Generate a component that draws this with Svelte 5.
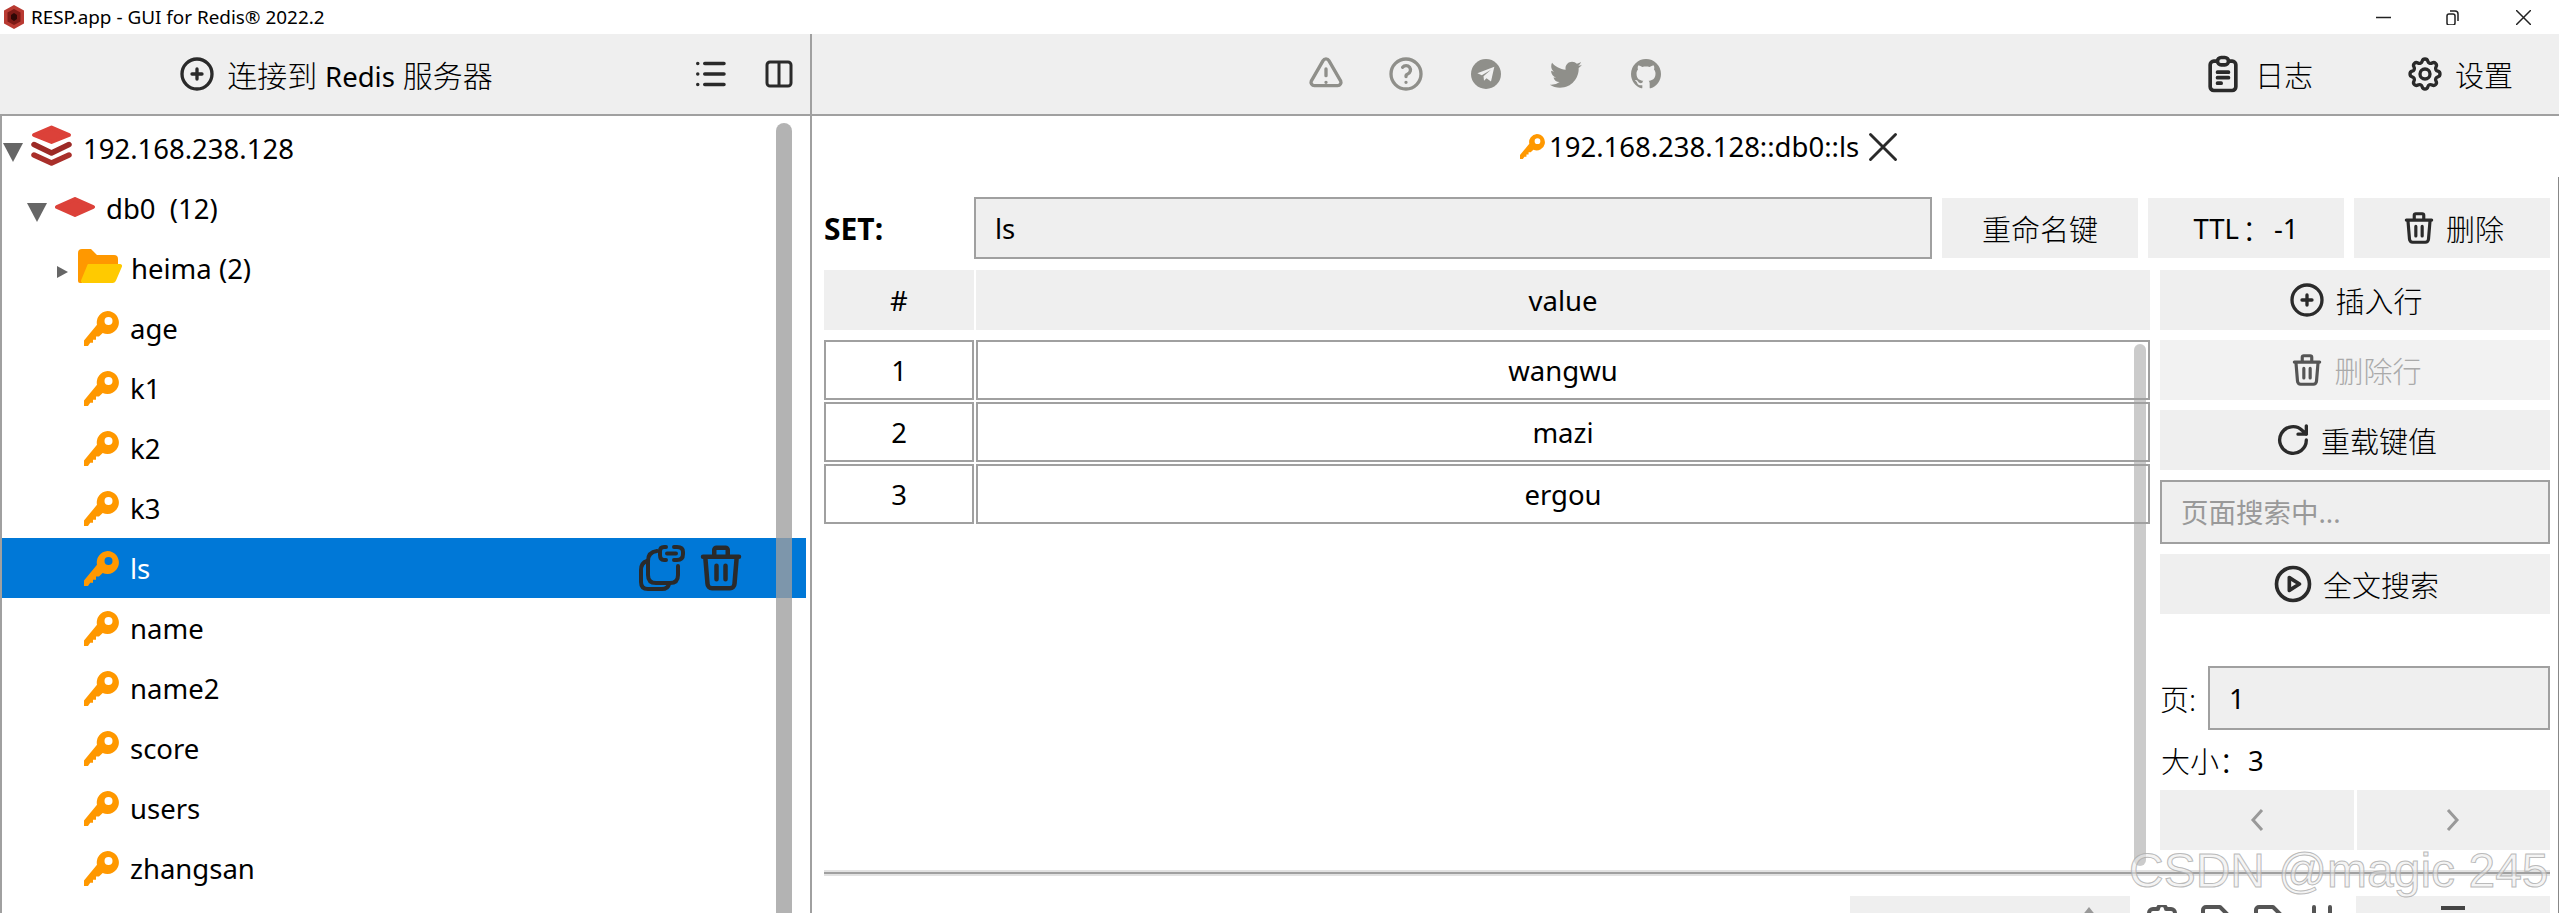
<script lang="ts">
	// Tabler style outline icons, drawn on a 24 box
	const ic = {
		plus: 'M3 12a9 9 0 1 0 18 0a9 9 0 1 0-18 0 M9 12h6 M12 9v6',
		list: 'M9 6h11 M9 12h11 M9 18h11 M5 6v.01 M5 12v.01 M5 18v.01',
		columns: 'M4 6a2 2 0 0 1 2-2h12a2 2 0 0 1 2 2v12a2 2 0 0 1-2 2h-12a2 2 0 0 1-2-2z M12 4v16',
		alert: 'M12 9v4 M12 17h.01 M5 19h14a2 2 0 0 0 1.84-2.75L13.74 4a2 2 0 0 0-3.5 0L3.16 16.25A2 2 0 0 0 5 19',
		help: 'M3 12a9 9 0 1 0 18 0a9 9 0 1 0-18 0 M12 17v.01 M12 13.5a1.5 1.5 0 0 1 1-1.5a2.6 2.6 0 1 0-3-4',
		clipboard: 'M9 5h-2a2 2 0 0 0-2 2v12a2 2 0 0 0 2 2h10a2 2 0 0 0 2-2v-12a2 2 0 0 0-2-2h-2 M11 3h2a2 2 0 0 1 0 4h-2a2 2 0 0 1 0-4 M9 11h6 M9 14h6 M9 17h2',
		gear: 'M10.325 4.317c.426-1.756 2.924-1.756 3.35 0a1.724 1.724 0 0 0 2.573 1.066c1.543-.94 3.31.826 2.37 2.37a1.724 1.724 0 0 0 1.065 2.572c1.756.426 1.756 2.924 0 3.35a1.724 1.724 0 0 0-1.066 2.573c.94 1.543-.826 3.31-2.37 2.37a1.724 1.724 0 0 0-2.572 1.065c-.426 1.756-2.924 1.756-3.35 0a1.724 1.724 0 0 0-2.573-1.066c-1.543.94-3.31-.826-2.37-2.37a1.724 1.724 0 0 0-1.065-2.572c-1.756-.426-1.756-2.924 0-3.35a1.724 1.724 0 0 0 1.066-2.573c-.94-1.543.826-3.31 2.37-2.37c1 .608 2.296.07 2.572-1.065z M9 12a3 3 0 1 0 6 0a3 3 0 1 0-6 0',
		trash: 'M4 7h16 M10 11v6 M14 11v6 M5 7l1 12a2 2 0 0 0 2 2h8a2 2 0 0 0 2-2l1-12 M9 7v-3a1 1 0 0 1 1-1h4a1 1 0 0 1 1 1v3',
		reload: 'M20 12a8 8 0 1 1-2.4-5.7L20 8.5 M20 3.5v5h-5',
		play: 'M3 12a9 9 0 1 0 18 0a9 9 0 1 0-18 0 M10 8.5v7l5.5-3.5z',
		close: 'M6 6l12 12 M18 6L6 18'
	};
	const twitter = 'M22.46 6c-.77.35-1.6.58-2.46.69.88-.53 1.56-1.37 1.88-2.38-.83.5-1.75.85-2.72 1.05C18.37 4.5 17.26 4 16 4c-2.35 0-4.27 1.92-4.27 4.29 0 .34.04.67.11.98C8.28 9.09 5.11 7.38 3 4.79c-.37.63-.58 1.37-.58 2.15 0 1.49.75 2.81 1.91 3.56-.71 0-1.37-.2-1.95-.5v.03c0 2.08 1.48 3.82 3.44 4.21a4.22 4.22 0 0 1-1.93.07 4.28 4.28 0 0 0 4 2.98 8.521 8.521 0 0 1-5.33 1.84c-.34 0-.68-.02-1.02-.06C3.44 20.29 5.7 21 8.12 21 16 21 20.33 14.46 20.33 8.79c0-.19 0-.37-.01-.56.84-.6 1.56-1.36 2.14-2.23z';
	const github = 'M12,3A9,9 0 0,0 3,12C3,16 5.6,19.4 9.2,20.6C9.6,20.7 9.8,20.4 9.8,20.2C9.8,20 9.8,19.4 9.8,18.7C7.3,19.2 6.8,17.5 6.8,17.5C6.4,16.4 5.8,16.2 5.8,16.2C5,15.6 5.9,15.6 5.9,15.6C6.8,15.7 7.2,16.5 7.2,16.5C8,17.9 9.3,17.5 9.8,17.3C9.9,16.7 10.1,16.3 10.4,16.1C8.4,15.9 6.3,15.1 6.3,11.7C6.3,10.7 6.7,9.9 7.2,9.3C7.1,9.1 6.8,8.1 7.3,6.9C7.3,6.9 8.1,6.7 9.8,7.8C10.5,7.6 11.3,7.5 12,7.5C12.7,7.5 13.5,7.6 14.2,7.8C15.9,6.7 16.7,6.9 16.7,6.9C17.2,8.1 16.9,9.1 16.8,9.3C17.3,9.9 17.7,10.7 17.7,11.7C17.7,15.1 15.6,15.9 13.6,16.1C13.9,16.4 14.2,16.9 14.2,17.8C14.2,19 14.2,20 14.2,20.2C14.2,20.4 14.4,20.7 14.8,20.6C18.4,19.4 21,16 21,12A9,9 0 0,0 12,3Z';

	const keys = ['age', 'k1', 'k2', 'k3', 'ls', 'name', 'name2', 'score', 'users', 'zhangsan'];
	const rows = ['wangwu', 'mazi', 'ergou'];

	let selected = $state('ls');
</script>

{#snippet ti(d, size)}
	<svg class="ti" width={size} height={size} viewBox="0 0 24 24"><path {d} /></svg>
{/snippet}

{#snippet key(size)}
	<svg class="key" width={size} height={size} viewBox="0 0 35 35">
		<path d="M23.5 0a11.5 11.5 0 1 1-4.8 22L15 25.600h-3v3.200H9v3H6.200L4 35H0v-5.500L13 13.800A11.500 11.500 0 0 1 23.500 0zm1 6a4 4 0 1 0 0 8a4 4 0 0 0 0-8z" fill-rule="evenodd" />
	</svg>
{/snippet}

<div class="app">
	<header class="titlebar">
		<svg class="logo" width="22" height="24" viewBox="0 0 22 24">
			<path d="M11 0l10 5.500v13L11 24 1 18.500v-13z" fill="#b93a32" />
			<path d="M11 4l6.500 3.500v9L11 20l-6.500-3.500v-9z" fill="#7d1a16" />
			<path d="M11 8l3 2v4l-3 2-3-2v-4z" fill="#2e0806" />
		</svg>
		<span class="title">RESP.app - GUI for Redis® 2022.2</span>
		<div class="winctl">
			<svg width="15" height="15" viewBox="0 0 15 15"><path d="M0 7.500h15" /></svg>
			<svg width="15" height="15" viewBox="0 0 15 15"><path d="M1 6a2 2 0 0 1 2-2h4a2 2 0 0 1 2 2v7a2 2 0 0 1-2 2H3a2 2 0 0 1-2-2z M4 1h5a3 3 0 0 1 3 3v7" /></svg>
			<svg width="15" height="15" viewBox="0 0 15 15"><path d="M0 0l15 15 M15 0L0 15" /></svg>
		</div>
	</header>

	<div class="main">
		<aside class="left">
			<div class="tools left-tools">
				<button class="connect cjk">
					{@render ti(ic.plus, 40)}
					<span>连接到 <span class="latin">Redis</span> 服务器</span>
				</button>
				<button class="plain">{@render ti(ic.list, 42)}</button>
				<button class="plain">{@render ti(ic.columns, 36)}</button>
			</div>

			<div class="tree">
				<div class="row root">
					<span class="arrow big"></span>
					<svg class="node-ic" width="41" height="41" viewBox="0 0 41 41">
						<path d="M20.500 2.500L38 10 20.500 17 3 10z" fill="#dc4139" stroke="#dc4139" stroke-width="4" stroke-linejoin="round" />
						<path d="M3 19.500l17.500 8.500L38 19.500" fill="none" stroke="#9c2a26" stroke-width="5.500" stroke-linejoin="round" stroke-linecap="round" />
						<path d="M3 30l17.500 8L38 30" fill="none" stroke="#a92f2a" stroke-width="5.500" stroke-linejoin="round" stroke-linecap="round" />
					</svg>
					<span>192.168.238.128</span>
				</div>
				<div class="row db">
					<span class="arrow big"></span>
					<svg class="db-ic" width="42" height="20" viewBox="0 0 42 20">
						<path d="M21 2L39 10 21 18 3 10z" fill="#dc4139" stroke="#dc4139" stroke-width="4" stroke-linejoin="round" />
					</svg>
					<span class="pre">db0  (12)</span>
				</div>
				<div class="row folder">
					<span class="arrow small"></span>
					<svg width="44" height="34" viewBox="0 0 44 34">
						<path d="M0 4a4 4 0 0 1 4-4h9l6 6h17a4 4 0 0 1 4 4v5H11L4 34H2a2 2 0 0 1-2-2z" fill="#ff9800" />
						<path d="M11 15h31a2 2 0 0 1 2 2.500l-6 14a4 4 0 0 1-3 2.500H5a2 2 0 0 1-2-2.500l6-14.500a2 2 0 0 1 2-2z" fill="#ffca00" />
					</svg>
					<span>heima (2)</span>
				</div>
				{#each keys as k}
					<button class="row leaf" class:sel={selected === k} onclick={() => (selected = k)}>
						{@render key(35)}
						<span>{k}</span>
						{#if selected === k}
							<span class="row-actions">
								<svg class="ti link" width="46" height="46" viewBox="0 0 46 46">
									<path d="M8 16Q2 18 2 25V37Q2 44 9 44H23Q29 44 30 39" />
									<path d="M18 6Q9 7 9 16V30Q9 38 17 38H31Q39 38 39 30V21" />
									<path d="M27 2H25Q21 2 21 6V10Q21 15 25 15H27 M35 2H38Q44 2 44 7V9Q44 15 38 15H35 M28 8.500H37" />
								</svg>
								{@render ti(ic.trash, 54)}
							</span>
						{/if}
					</button>
				{/each}
				<div class="tree-scroll"></div>
			</div>
		</aside>

		<section class="right">
			<div class="tools right-tools">
				<div class="links">
					{@render ti(ic.alert, 40)}
					{@render ti(ic.help, 40)}
					<svg width="40" height="40" viewBox="0 0 24 24">
						<circle cx="12" cy="12" r="9" fill="#8f8f8a" />
						<path d="M6.800 11.600L17 7.600 15 16.500 12.300 14.500 10.800 16 10.500 13.400 15 9.500 9.500 12.700z" fill="#efefef" />
					</svg>
					<svg width="40" height="40" viewBox="0 0 24 24"><path d={twitter} fill="#8f8f8a" transform="translate(.9 .9) scale(.92)" /></svg>
					<svg width="40" height="40" viewBox="0 0 24 24"><path d={github} fill="#8f8f8a" /></svg>
				</div>
				<button class="plain labeled cjk">{@render ti(ic.clipboard, 44)}日志</button>
				<button class="plain labeled cjk">{@render ti(ic.gear, 40)}设置</button>
			</div>

			<div class="tab">
				{@render key(25)}
				<span>192.168.238.128::db0::ls</span>
				{@render ti(ic.close, 50)}
			</div>

			<div class="body">
				<div class="keybar">
					<strong class="type">SET:</strong>
					<input class="field name" value="ls" />
					<button class="btn cjk">重命名键</button>
					<button class="btn cjk"><span class="latin">TTL</span><span class="colon">：</span><span class="latin">-1</span></button>
					<button class="btn cjk">{@render ti(ic.trash, 38)}删除</button>
				</div>

				<div class="content">
					<div class="table">
						<div class="cols head">
							<div class="th">#</div>
							<div class="th">value</div>
						</div>
						{#each rows as r, i}
							<div class="cols">
								<div class="td">{i + 1}</div>
								<div class="td">{r}</div>
							</div>
						{/each}
						<div class="table-scroll"></div>
					</div>

					<div class="side">
						<button class="btn cjk">{@render ti(ic.plus, 40)}插入行</button>
						<button class="btn cjk off">{@render ti(ic.trash, 38)}删除行</button>
						<button class="btn cjk">{@render ti(ic.reload, 40)}重载键值</button>
						<input class="field search cjk" placeholder="页面搜索中..." />
						<button class="btn cjk">{@render ti(ic.play, 44)}全文搜索</button>
						<div class="page cjk">
							<span>页:</span>
							<input class="field" value="1" />
						</div>
						<div class="size cjk">大小：<span class="latin">3</span></div>
						<div class="nav">
							<button class="btn"><svg class="chev" width="14" height="22" viewBox="0 0 14 22"><path d="M12 1L3 11l9 10" /></svg></button>
							<button class="btn"><svg class="chev" width="14" height="22" viewBox="0 0 14 22"><path d="M2 1l9 10-9 10" /></svg></button>
						</div>
					</div>
				</div>

				<div class="splitter"></div>

				<div class="bottom">
					<div class="combo"><svg width="16" height="10" viewBox="0 0 16 10"><path d="M8 0l8 10H0z" fill="#999" /></svg></div>
					<div class="fmt">
						<svg width="32" height="30" viewBox="0 0 32 30"><path d="M3 12V8a4 4 0 0 1 4-4h5a4 4 0 0 1 8 0h5a4 4 0 0 1 4 4v4" /></svg>
						<svg width="30" height="30" viewBox="0 0 30 30"><path d="M2 12V5a3 3 0 0 1 3-3h14l9 9" /></svg>
						<svg width="30" height="30" viewBox="0 0 30 30"><path d="M2 12V5a3 3 0 0 1 3-3h14l9 9" /></svg>
						<svg width="30" height="30" viewBox="0 0 30 30"><path d="M7 2v8 M23 2v8" /></svg>
					</div>
					<button class="btn save"><svg width="24" height="8" viewBox="0 0 24 8"><path d="M0 2h24" stroke="#444" stroke-width="4" /></svg></button>
				</div>
			</div>
		</section>
	</div>

	<div class="watermark">CSDN @magic 245</div>
</div>

<style>
	:global(body) {
		margin: 0;
		overflow: hidden;
		background: #fff;
	}

	.app {
		position: relative;
		width: 2559px;
		height: 913px;
		overflow: hidden;
		display: flex;
		flex-direction: column;
		font-family: "Noto Sans", "Noto Sans CJK SC", sans-serif;
		font-size: 27.5px;
		color: #000;
	}

	button {
		font: inherit;
		color: inherit;
		border: none;
		background: none;
		padding: 0;
		cursor: pointer;
	}

	.cjk {
		font-size: 29px;
		font-weight: 300;
	}

	.latin {
		font-size: 27.5px;
		font-weight: 400;
	}

	.ti {
		flex: none;
		fill: none;
		stroke: #2a2a2a;
		stroke-width: 2;
		stroke-linecap: round;
		stroke-linejoin: round;
	}

	.link {
		stroke-width: 4;
	}

	/* title bar */
	.titlebar {
		height: 34px;
		flex: none;
		display: flex;
		align-items: center;
		padding-left: 3px;
		font-size: 18.900px;
	}

	.title {
		margin-left: 6px;
	}

	.winctl {
		margin-left: auto;
		margin-right: 28px;
		display: flex;
		gap: 55px;
	}

	.winctl svg {
		fill: none;
		stroke: #222;
		stroke-width: 1.500;
	}

	/* panes */
	.main {
		flex: 1;
		display: flex;
		min-height: 0;
	}

	.left {
		width: 810px;
		flex: none;
		border-right: 2px solid #a0a0a0;
		display: flex;
		flex-direction: column;
	}

	.right {
		flex: 1;
		min-width: 0;
		display: flex;
		flex-direction: column;
	}

	.tools {
		height: 80px;
		flex: none;
		background: #efefef;
		border-bottom: 2px solid #a0a0a0;
		display: flex;
		align-items: center;
	}

	.left-tools {
		padding-right: 13px;
		gap: 30px;
	}

	.connect {
		width: 670px;
		margin-right: -11px;
		display: flex;
		align-items: center;
		justify-content: center;
		gap: 10px;
		font-size: 30px;
	}

	.plain {
		display: flex;
		align-items: center;
	}

	/* tree */
	.tree {
		position: relative;
		flex: 1;
		min-height: 0;
		overflow: hidden;
		border-left: 2px solid #a0a0a0;
		padding: 2px 4px 0 0;
	}

	.row {
		height: 60px;
		width: 100%;
		display: flex;
		align-items: center;
		text-align: left;
		box-sizing: border-box;
	}

	.arrow {
		flex: none;
		width: 0;
		height: 0;
	}

	.arrow.big {
		border-left: 10px solid transparent;
		border-right: 10px solid transparent;
		border-top: 19px solid #666;
		margin-top: 9px;
	}

	.arrow.small {
		border-top: 6px solid transparent;
		border-bottom: 6px solid transparent;
		border-left: 11px solid #666;
		margin-top: 8px;
	}

	.root {
		padding-left: 1px;
	}

	.node-ic {
		margin: -5px 11px 0 8px;
	}

	.db {
		padding-left: 25px;
	}

	.db-ic {
		margin: -2px 10px 0 7px;
	}

	.pre {
		white-space: pre;
	}

	.folder {
		padding-left: 55px;
	}

	.folder svg {
		margin: -4px 9px 0 10px;
	}

	.leaf {
		padding-left: 82px;
		gap: 11px;
		position: relative;
	}

	.key {
		flex: none;
		fill: #ff9800;
	}

	.sel {
		background: #0078d7;
		color: #fff;
	}

	.row-actions {
		margin-left: auto;
		margin-right: 58px;
		display: flex;
		align-items: center;
		gap: 9px;
	}

	.tree-scroll {
		position: absolute;
		left: 774px;
		top: 7px;
		bottom: -10px;
		width: 16px;
		border-radius: 8px 8px 0 0;
		background: rgba(158, 158, 158, 0.79);
	}

	/* top right tools */
	.right-tools {
		padding-right: 46px;
	}

	.links {
		margin-left: 494px;
		margin-right: auto;
		display: flex;
		gap: 40px;
	}

	.links .ti {
		stroke: #8f8f8a;
	}

	.labeled {
		gap: 10px;
	}

	.labeled + .labeled {
		margin-left: 92px;
	}

	/* tab */
	.tab {
		height: 61px;
		flex: none;
		display: flex;
		align-items: center;
		padding-left: 708px;
		gap: 4px;
	}

	.tab .ti {
		margin-left: -5px;
		stroke-width: 1.400;
	}

	.body {
		flex: 1;
		min-height: 0;
		padding: 20px 8px 0 12px;
		border-right: 1px solid #888;
	}

	.keybar {
		height: 62px;
		display: flex;
		align-items: center;
		gap: 10px;
		margin-bottom: 11px;
	}

	.type {
		width: 140px;
		font-size: 30px;
	}

	.field {
		box-sizing: border-box;
		border: 2px solid #a0a0a0;
		background: #efefef;
		padding: 0 19px;
		font: inherit;
		color: #000;
		outline: none;
		min-width: 0;
	}

	.name {
		flex: 1;
		height: 62px;
	}

	.btn {
		height: 60px;
		background: #efefef;
		display: flex;
		align-items: center;
		justify-content: center;
		gap: 8px;
	}

	.keybar .btn {
		width: 196px;
		flex: none;
	}

	.colon {
		margin: 0 -5px;
	}

	.off {
		background: #f2f2f2;
		color: #aaa;
	}

	.off .ti {
		stroke: #555;
	}

	/* table */
	.content {
		height: 600px;
		display: flex;
		gap: 10px;
	}

	.table {
		position: relative;
		width: 1326px;
		flex: none;
		display: flex;
		flex-direction: column;
		gap: 2px;
	}

	.cols {
		display: grid;
		grid-template-columns: 150px 1fr;
		gap: 2px;
	}

	.head {
		margin-bottom: 8px;
	}

	.th,
	.td {
		height: 60px;
		box-sizing: border-box;
		display: flex;
		align-items: center;
		justify-content: center;
	}

	.th {
		background: #efefef;
	}

	.td {
		border: 2px solid #a0a0a0;
	}

	.table-scroll {
		position: absolute;
		left: 1310px;
		top: 74px;
		height: 522px;
		width: 12px;
		border-radius: 6px;
		background: rgba(160, 160, 160, 0.55);
	}

	/* side column */
	.side {
		flex: 1;
		min-width: 0;
		display: flex;
		flex-direction: column;
		gap: 10px;
	}

	.search {
		height: 64px;
		flex: none;
		width: 100%;
	}

	.search::placeholder {
		color: #999;
		opacity: 1;
	}

	.page {
		margin-top: 42px;
		height: 64px;
		display: flex;
		align-items: center;
		gap: 12px;
	}

	.page .field {
		flex: 1;
		height: 64px;
		font-size: 27.500px;
		font-weight: 400;
	}

	.size {
		height: 40px;
		display: flex;
		align-items: center;
		padding-left: 1px;
	}

	.nav {
		display: grid;
		grid-template-columns: 1fr 1fr;
		gap: 3px;
	}

	.chev {
		fill: none;
		stroke: #999;
		stroke-width: 3;
	}

	/* bottom strip, cut off by the window */
	.splitter {
		height: 2px;
		border-top: 2px solid #e2e2e2;
		border-bottom: 2px solid #e2e2e2;
		background: #a0a0a0;
		margin-bottom: 20px;
	}

	.bottom {
		display: flex;
		height: 60px;
	}

	.combo {
		margin-left: 1026px;
		width: 280px;
		box-sizing: border-box;
		background: #efefef;
		display: flex;
		justify-content: flex-end;
		padding: 11px 33px 0 0;
	}

	.fmt {
		margin-left: 16px;
		width: 191px;
		display: flex;
		justify-content: space-between;
		padding-top: 9px;
	}

	.fmt svg {
		fill: none;
		stroke: #555;
		stroke-width: 4;
		stroke-linecap: round;
		stroke-linejoin: round;
	}

	.save {
		margin-left: 19px;
		width: 194px;
		align-items: flex-start;
		padding-top: 10px;
	}

	.watermark {
		position: absolute;
		left: 2129px;
		top: 843px;
		font-family: "Liberation Sans", sans-serif;
		font-size: 48px;
		line-height: 55px;
		white-space: nowrap;
		color: rgba(235, 235, 235, 0.55);
		-webkit-text-stroke: 1px rgba(170, 170, 170, 0.8);
	}
</style>
